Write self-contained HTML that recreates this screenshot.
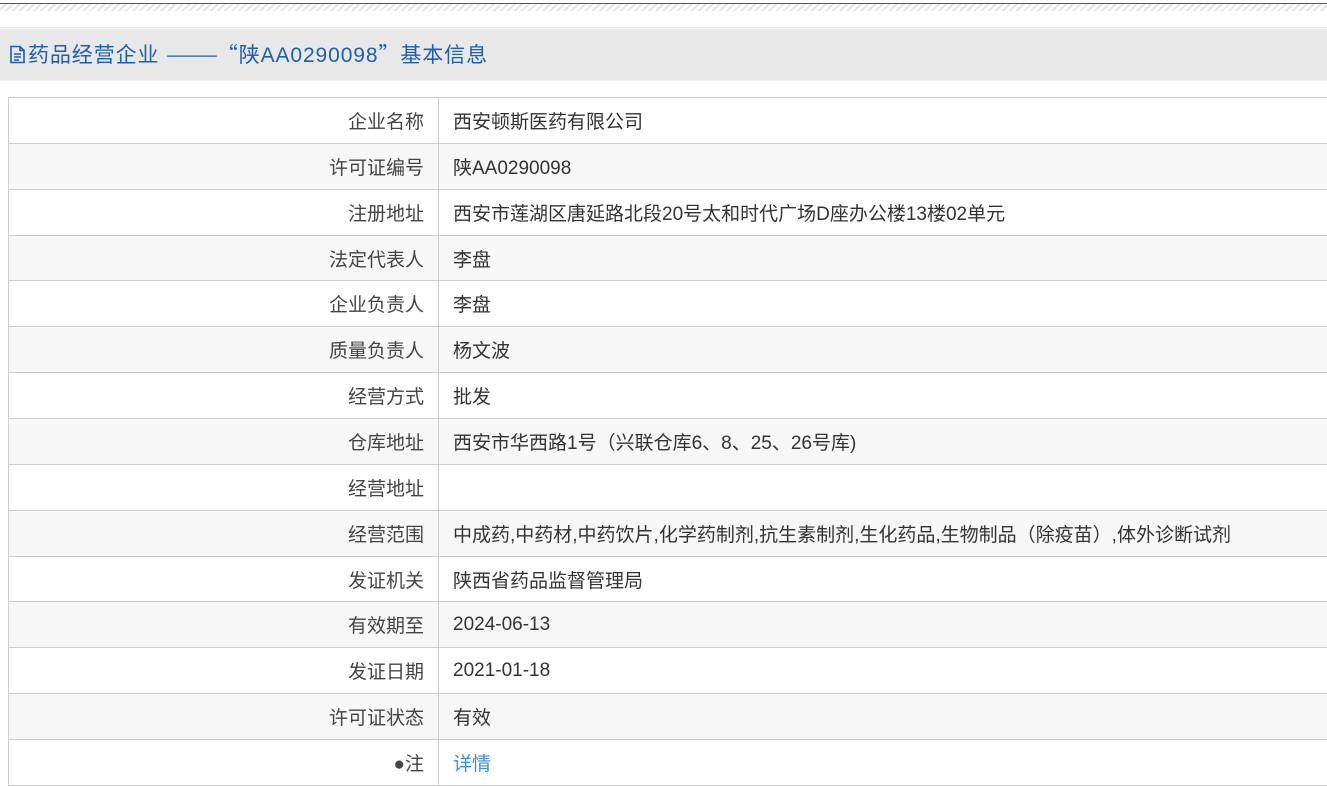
<!DOCTYPE html>
<html><head><meta charset="utf-8"><style>
*{margin:0;padding:0;box-sizing:border-box}
body{width:1327px;height:763px;overflow:hidden;background:#fff;font-family:"Liberation Sans","Noto Sans CJK SC",sans-serif;position:relative}
.blue{position:absolute;top:3px;left:0;width:1327px;height:1px;background:#1f5fb0}
.hatch{position:absolute;top:4px;left:0;width:1327px;height:7px;background:repeating-linear-gradient(135deg,#fff 0 3px,#e4e4e4 3px 5px)}
.gl{position:absolute;top:27px;left:0;width:1327px;height:1px;background:#e2e2e2}
.bar{position:absolute;top:29px;left:0;width:1327px;height:52px;background:#e8e8e8;border-bottom:1px solid #eef0f6}
.bar span{position:absolute;left:9px;top:12px;font-size:21px;color:#1a5fb4;line-height:26px;white-space:nowrap;letter-spacing:0.9px}
.q{font-family:"Noto Sans CJK SC",sans-serif}
table{position:absolute;top:97px;left:8px;width:1330px;border-collapse:collapse;font-size:19px;color:#333}
td{height:45.86px;border-top:1px solid #ccc;border-bottom:1px solid #ccc;padding:0 14px;vertical-align:middle}
td.l{width:430px;text-align:right;border-left:1px solid #ccc;border-right:1px solid #ccc;color:#444}
tr:nth-child(even) td{background:#f7f7f7}
a{color:#3a8ee6;text-decoration:none}
</style></head><body>
<div class="blue"></div><div class="hatch"></div><div class="gl"></div>
<div class="bar"><span><svg width="17" height="19" viewBox="0 0 17 19" style="vertical-align:-2px;margin-right:2px"><path d="M2 1.5h9l4 4v12H2z M11 1.5v4h4 M5 9h7 M5 12h7 M5 15h5" fill="none" stroke="#1a5fb4" stroke-width="1.6"/></svg>药品经营企业 <span class="q" style="position:static;letter-spacing:-1px">———</span><span class="q" style="position:static">“</span>陕AA0290098<span class="q" style="position:static">”</span>基本信息</span></div>
<table>
<tr><td class="l">企业名称</td><td>西安顿斯医药有限公司</td></tr>
<tr><td class="l">许可证编号</td><td>陕AA0290098</td></tr>
<tr><td class="l">注册地址</td><td>西安市莲湖区唐延路北段20号太和时代广场D座办公楼13楼02单元</td></tr>
<tr><td class="l">法定代表人</td><td>李盘</td></tr>
<tr><td class="l">企业负责人</td><td>李盘</td></tr>
<tr><td class="l">质量负责人</td><td>杨文波</td></tr>
<tr><td class="l">经营方式</td><td>批发</td></tr>
<tr><td class="l">仓库地址</td><td>西安市华西路1号（兴联仓库6、8、25、26号库)</td></tr>
<tr><td class="l">经营地址</td><td></td></tr>
<tr><td class="l">经营范围</td><td>中成药,中药材,中药饮片,化学药制剂,抗生素制剂,生化药品,生物制品（除疫苗）,体外诊断试剂</td></tr>
<tr><td class="l">发证机关</td><td>陕西省药品监督管理局</td></tr>
<tr><td class="l">有效期至</td><td>2024-06-13</td></tr>
<tr><td class="l">发证日期</td><td>2021-01-18</td></tr>
<tr><td class="l">许可证状态</td><td>有效</td></tr>
<tr><td class="l">●注</td><td><a>详情</a></td></tr>
</table>
</body></html>
